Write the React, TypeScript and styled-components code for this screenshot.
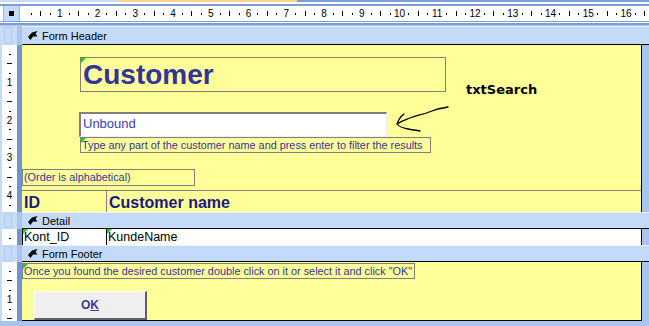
import React from 'react';
import styled, { createGlobalStyle, css } from 'styled-components';

const STEP = 9.45;

const GlobalStyle = createGlobalStyle`
  html, body {
    margin: 0;
    padding: 0;
    background: #a9c5ee;
    overflow: hidden;
  }
  body {
    font-family: 'Liberation Sans', Arial, sans-serif;
  }
`;

type MarkProps = { index: number; vertical?: boolean };

const RulerMark = ({ index, vertical }: MarkProps) => {
  if (index % 4 === 0) return <RulerNum>{index / 4}</RulerNum>;
  if (index % 4 === 2) return <Tick $vertical={vertical} $long />;
  return <Tick $vertical={vertical} />;
};

const HRuler = () => (
  <HRulerStrip>
    {Array.from({ length: 67 }, (_, i) => (
      <HSlot key={i}>
        <RulerMark index={i + 1} />
      </HSlot>
    ))}
  </HRulerStrip>
);

const VRuler = ({ height }: { height: number }) => (
  <VRulerCol>
    <VRulerStrip>
      {Array.from({ length: Math.ceil(height / STEP) }, (_, i) => (
        <VSlot key={i}>
          <RulerMark index={i + 1} vertical />
        </VSlot>
      ))}
    </VRulerStrip>
  </VRulerCol>
);

const SectionIcon = () => (
  <svg width="10" height="9" viewBox="0 0 10 9">
    <path d="M0 6 L4 1.5 L9.5 0 L7.5 3 L9.5 5.5 L5 5.5 L2.5 9 Z" fill="#000" />
  </svg>
);

const SectionBar = ({ title, height }: { title: string; height: number }) => (
  <BarRow $h={height}>
    <Selector>
      <SelectorBox />
    </Selector>
    <Bar>
      <SectionIcon />
      <BarTitle>{title}</BarTitle>
    </Bar>
  </BarRow>
);

const Arrow = () => (
  <ArrowSvg width="62" height="32" viewBox="0 0 62 32">
    <path
      d="M58 3 C52 4 47 5 42 7 C35 10 28 11 20 14 C15 16 11 17 7 20 M7 20 C8 17 10 13 14 10 M7 20 C9 23 13 24 18 25 C22 26 26 26 30 27"
      fill="none"
      stroke="#000"
      strokeWidth="1.3"
      strokeLinecap="round"
    />
  </ArrowSvg>
);

export default function App() {
  return (
    <>
      <GlobalStyle />
      <Screen>
        <TabStrip>
          <TabSeg $w={120} $c="#c9dbf3" />
          <TabSeg $w={177} $c="#fcd38c" />
          <TabSeg $c="#7e9fd6" />
        </TabStrip>
        <RulerRow>
          <Corner>
            <CornerDot />
          </Corner>
          <HRuler />
        </RulerRow>
        <RulerBase />

        <SectionBar title="Form Header" height={19} />
        <BodyRow $h={167}>
          <VRuler height={167} />
          <Canvas>
            <Label $x={58} $y={12} $w={366} $h={35} $marked $title>
              Customer
            </Label>
            <TextBox $x={57} $y={67} $w={308} $h={25}>
              Unbound
            </TextBox>
            <Label $x={58} $y={92} $w={351} $h={16} $marked>
              Type any part of the customer name and press enter to filter the results
            </Label>
            <Note $x={444} $y={37}>txtSearch</Note>
            <Arrow />
            <Label $x={0} $y={124} $w={173} $h={17}>
              (Order is alphabetical)
            </Label>
            <HeadRow>
              <HeadCell $w={85}>ID</HeadCell>
              <HeadCell>Customer name</HeadCell>
            </HeadRow>
          </Canvas>
          <Gutter />
        </BodyRow>

        <SectionBar title="Detail" height={17} />
        <BodyRow $h={16}>
          <VRuler height={16} />
          <DetailCanvas>
            <Field $w={85} $first>
              Kont_ID
            </Field>
            <Field>KundeName</Field>
          </DetailCanvas>
          <Gutter />
        </BodyRow>

        <SectionBar title="Form Footer" height={17} />
        <BodyRow $h={59}>
          <VRuler height={59} />
          <Canvas $closed>
            <Label $x={0} $y={1} $w={393} $h={16} $marked>
              Once you found the desired customer double click on it or select it and click "OK"
            </Label>
            <Button>
              O<u>K</u>
            </Button>
          </Canvas>
          <Gutter />
        </BodyRow>
      </Screen>
    </>
  );
}

const Screen = styled.div`
  width: 649px;
  height: 326px;
  display: flex;
  flex-direction: column;
  background: #a9c5ee;
  overflow: hidden;
`;

const TabStrip = styled.div`
  display: flex;
  height: 2px;
  border-bottom: 2px solid #fff;
  box-shadow: 0 2px 0 #7e9fd6;
  margin-bottom: 2px;
`;

const TabSeg = styled.div<{ $w?: number; $c: string }>`
  ${({ $w }) => ($w ? `width: ${$w}px;` : 'flex: 1;')}
  background: ${({ $c }) => $c};
`;

const RulerRow = styled.div`
  display: flex;
  height: 15px;
  background: #fff;
  border-bottom: 1px solid #7e9fd6;
`;

const Corner = styled.div`
  width: 15px;
  margin: 0 3px;
  background: #c5dcf8;
  border-left: 1px solid #9ab8e4;
  border-right: 1px solid #9ab8e4;
  display: flex;
  align-items: center;
  justify-content: center;
`;

const CornerDot = styled.div`
  width: 5px;
  height: 5px;
  background: #000;
`;

const HRulerStrip = styled.div`
  flex: 1;
  display: flex;
  padding-left: 3.7px;
  overflow: hidden;
`;

const HSlot = styled.div`
  flex: 0 0 ${STEP}px;
  width: ${STEP}px;
  min-width: 0;
  display: flex;
  align-items: center;
  justify-content: center;
`;

const RulerNum = styled.span`
  font-size: 10px;
  line-height: 10px;
  color: #000;
  white-space: nowrap;
`;

const Tick = styled.span<{ $vertical?: boolean; $long?: boolean }>`
  flex-shrink: 0;
  background: #000;
  ${({ $vertical, $long }) =>
    $vertical
      ? css`
          width: ${$long ? 5 : 2}px;
          height: 1px;
        `
      : css`
          width: 1px;
          height: ${$long ? 5 : 2}px;
        `}
`;

const RulerBase = styled.div`
  height: 1px;
  background: #fff;
  border-bottom: 2px solid #7e9fd6;
  margin-bottom: 1px;
`;

const BarRow = styled.div<{ $h: number }>`
  display: grid;
  grid-template-columns: 22px 1fr;
  height: ${({ $h }) => $h}px;
`;

const Selector = styled.div`
  background: #c9dbf3;
  padding: 1px 5px 1px 4px;
  border-right: 5px solid #a9c5ee;
`;

const SelectorBox = styled.div`
  height: 100%;
  background: #c3daf9;
  box-sizing: border-box;
  border: 1px solid #b3cdf2;
`;

const Bar = styled.div`
  background: #c3daf9;
  border-top: 1px solid #eef5ff;
  border-bottom: 1px solid #000;
  display: flex;
  align-items: center;
  gap: 4px;
  padding-left: 6px;
`;

const BarTitle = styled.span`
  font-size: 11px;
  color: #000;
`;

const BodyRow = styled.div<{ $h: number }>`
  display: grid;
  grid-template-columns: 22px 620px 1fr;
  height: ${({ $h }) => $h}px;
`;

const VRulerCol = styled.div`
  background: #c9dbf3;
  padding-left: 2px;
  border-right: 5px solid #6f94d0;
  display: flex;
  overflow: hidden;
`;

const VRulerStrip = styled.div`
  flex: 1;
  background: #fff;
  display: flex;
  flex-direction: column;
  padding-top: ${STEP / 2}px;
`;

const VSlot = styled.div`
  flex: 0 0 ${STEP}px;
  height: ${STEP}px;
  min-height: 0;
  display: flex;
  align-items: center;
  justify-content: center;
`;

const Canvas = styled.div<{ $closed?: boolean }>`
  position: relative;
  background: #ffff99;
  border-right: 1px solid #000;
  ${({ $closed }) => $closed && 'border-bottom: 1px solid #000;'}
`;

const Gutter = styled.div`
  background: #a9c5ee;
`;

type BoxProps = { $x: number; $y: number; $w: number; $h: number };

const placed = css<BoxProps>`
  position: absolute;
  left: ${({ $x }) => $x}px;
  top: ${({ $y }) => $y}px;
  width: ${({ $w }) => $w}px;
  height: ${({ $h }) => $h}px;
  box-sizing: border-box;
`;

const greenMark = css`
  &::before {
    content: '';
    position: absolute;
    left: 0;
    top: 0;
    border-top: 5px solid #00e000;
    border-right: 5px solid transparent;
  }
`;

const Label = styled.div<BoxProps & { $marked?: boolean; $title?: boolean }>`
  ${placed};
  border: 1px solid #808080;
  color: #333399;
  white-space: nowrap;
  padding-left: ${({ $title }) => ($title ? 2 : 1)}px;
  font-size: ${({ $title }) => ($title ? 28 : 10.85)}px;
  font-weight: ${({ $title }) => ($title ? 700 : 400)};
  line-height: ${({ $h }) => $h - 2}px;
  ${({ $marked }) => $marked && greenMark}
`;

const TextBox = styled.div<BoxProps>`
  ${placed};
  background: #fff;
  border-style: solid;
  border-width: 2px 1px 1px 2px;
  border-color: #808080 #f0f0f0 #f0f0f0 #808080;
  color: #3b3bc0;
  font-size: 13px;
  line-height: 20px;
  padding-left: 2px;
`;

const Note = styled.div<{ $x: number; $y: number }>`
  position: absolute;
  left: ${({ $x }) => $x}px;
  top: ${({ $y }) => $y}px;
  font-family: 'DejaVu Sans', Verdana, sans-serif;
  font-weight: 700;
  font-size: 13px;
  color: #000;
`;

const ArrowSvg = styled.svg`
  position: absolute;
  left: 368px;
  top: 59px;
`;

const HeadRow = styled.div`
  position: absolute;
  left: 0;
  right: 0;
  bottom: 0;
  height: 21px;
  display: flex;
  border-top: 1px solid #808080;
`;

const HeadCell = styled.div<{ $w?: number }>`
  ${({ $w }) => ($w ? `width: ${$w}px;` : 'flex: 1;')}
  box-sizing: border-box;
  border-right: 1px solid #808080;
  color: #1a1a80;
  font-size: 16px;
  font-weight: 700;
  line-height: 23px;
  padding-left: 2px;
  &:last-child {
    border-right: none;
  }
`;

const DetailCanvas = styled.div`
  display: flex;
  background: #fff;
  border-right: 1px solid #000;
`;

const Field = styled.div<{ $w?: number; $first?: boolean }>`
  position: relative;
  ${({ $w }) => ($w ? `width: ${$w}px;` : 'flex: 1;')}
  box-sizing: border-box;
  border-right: ${({ $first }) => ($first ? '1px solid #000' : 'none')};
  ${({ $first }) => $first && 'border-left: 1px solid #000;'}
  color: #000;
  font-size: 12.5px;
  line-height: 16px;
  padding-left: 1px;
  ${greenMark}
`;

const Button = styled.div`
  position: absolute;
  left: 12px;
  top: 29px;
  width: 113px;
  height: 29px;
  box-sizing: border-box;
  background: #efefef;
  border-style: solid;
  border-width: 1px 2px 2px 1px;
  border-color: #fff #606060 #606060 #fff;
  display: flex;
  align-items: center;
  justify-content: center;
  color: #3a3a99;
  font-size: 12px;
  font-weight: 700;
`;
